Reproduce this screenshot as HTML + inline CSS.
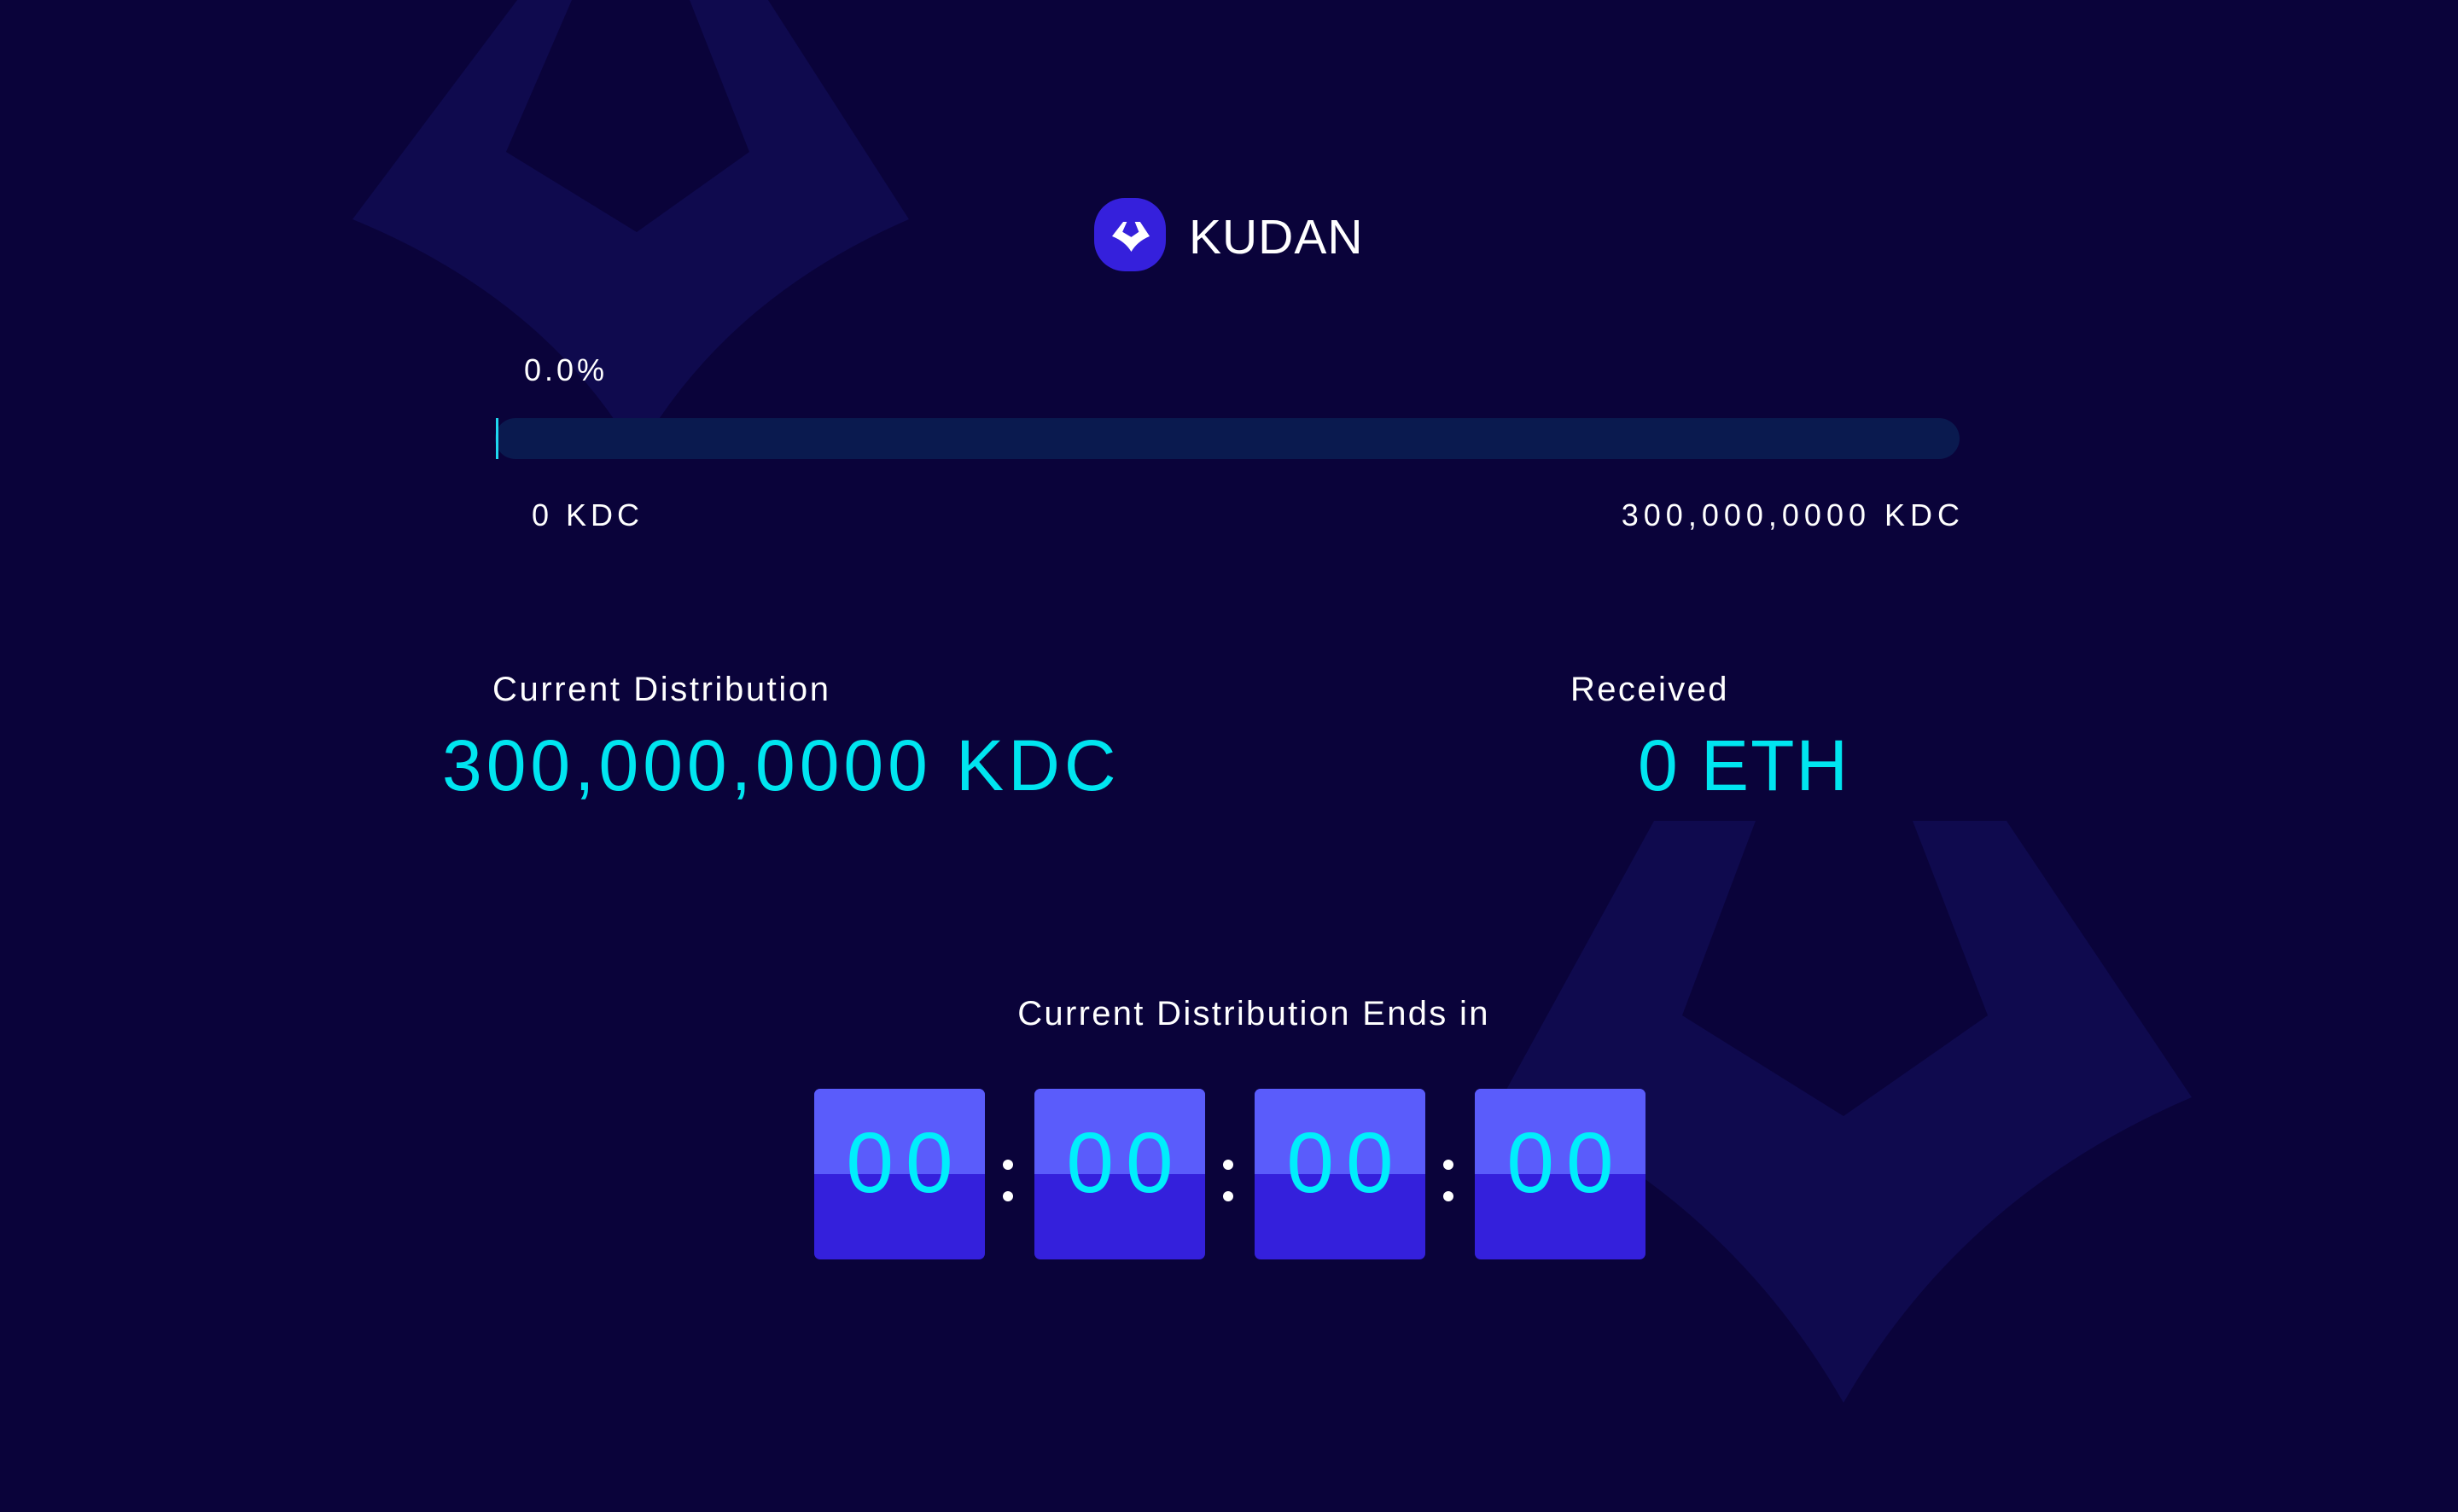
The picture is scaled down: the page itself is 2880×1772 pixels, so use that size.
<!DOCTYPE html>
<html><head><meta charset="utf-8"><style>
html,body{margin:0;padding:0;}
body{width:2880px;height:1772px;background:#0a033a;position:relative;overflow:hidden;font-family:"Liberation Sans",sans-serif;color:#fff;}
.t{position:absolute;white-space:nowrap;line-height:1;}
.box{position:absolute;top:1276px;width:200px;height:200px;border-radius:7px;overflow:hidden;background:#3420dc;}
.box .top{position:absolute;left:0;top:0;width:200px;height:100px;background:#5a5cfb;}
.dig{position:absolute;top:1263px;width:200px;height:200px;text-align:center;font-size:100px;line-height:200px;color:#00eefc;letter-spacing:14px;text-indent:14px;font-weight:normal;}
.dot{position:absolute;width:12px;height:12px;border-radius:50%;background:#fff;}
</style></head><body>
<svg width="2880" height="1772" style="position:absolute;left:0;top:0">
<path d="M413,257 L606,0 L670,0 L593,178 L746,272 L878,178 L808,0 L900,0 L1065,257 Q850,350 746,533 Q640,350 413,257 Z" fill="#0f0a4e"/>
<path d="M1760,1286 L1938,962 L2057,962 L1971,1190 L2160,1308 L2329,1190 L2241,962 L2351,962 L2568,1286 Q2300,1400 2160,1644 Q2020,1400 1760,1286 Z" fill="#0f0a4e"/>
<rect x="580" y="490" width="1716" height="48" rx="24" fill="#0a1a4f"/>
<rect x="581" y="490" width="3" height="48" fill="#1fd8f0"/>
<rect x="1282" y="232" width="84" height="86" rx="36" fill="#3520dc"/>
<g transform="translate(1303,260) scale(0.0675,0.0657)">
<path d="M0,257 L193,0 L257,0 L180,178 L333,272 L465,178 L395,0 L487,0 L652,257 Q437,350 333,533 Q227,350 0,257 Z" fill="#fff"/>
</g>
</svg>
<div class="t" style="left:1393px;top:250px;font-size:57px;letter-spacing:1px;">KUDAN</div>
<div class="t" style="left:614px;top:416px;font-size:36px;letter-spacing:4px;">0.0%</div>
<div class="t" style="left:623px;top:586px;font-size:36px;letter-spacing:5px;">0 KDC</div>
<div class="t" style="right:584px;top:586px;font-size:36px;letter-spacing:6px;margin-right:-6px;">300,000,0000 KDC</div>
<div class="t" style="left:577px;top:788px;font-size:40px;letter-spacing:2.6px;">Current Distribution</div>
<div class="t" style="left:1840px;top:788px;font-size:40px;letter-spacing:2.4px;">Received</div>
<div class="t" style="left:518px;top:855px;font-size:84px;letter-spacing:5px;color:#00e5f0;">300,000,0000 KDC</div>
<div class="t" style="left:1919px;top:855px;font-size:84px;letter-spacing:2px;color:#00e5f0;">0 ETH</div>
<div class="t" style="left:0;width:2938px;text-align:center;top:1168px;font-size:40px;letter-spacing:2.3px;">Current Distribution Ends in</div>

<div class="box" style="left:954px"><div class="top"></div></div>
<div class="box" style="left:1212px"><div class="top"></div></div>
<div class="box" style="left:1470px"><div class="top"></div></div>
<div class="box" style="left:1728px"><div class="top"></div></div>
<div class="dig" style="left:954px">00</div>
<div class="dig" style="left:1212px">00</div>
<div class="dig" style="left:1470px">00</div>
<div class="dig" style="left:1728px">00</div>
<div class="dot" style="left:1175px;top:1359px"></div><div class="dot" style="left:1175px;top:1396px"></div>
<div class="dot" style="left:1433px;top:1359px"></div><div class="dot" style="left:1433px;top:1396px"></div>
<div class="dot" style="left:1691px;top:1359px"></div><div class="dot" style="left:1691px;top:1396px"></div>
</body></html>
